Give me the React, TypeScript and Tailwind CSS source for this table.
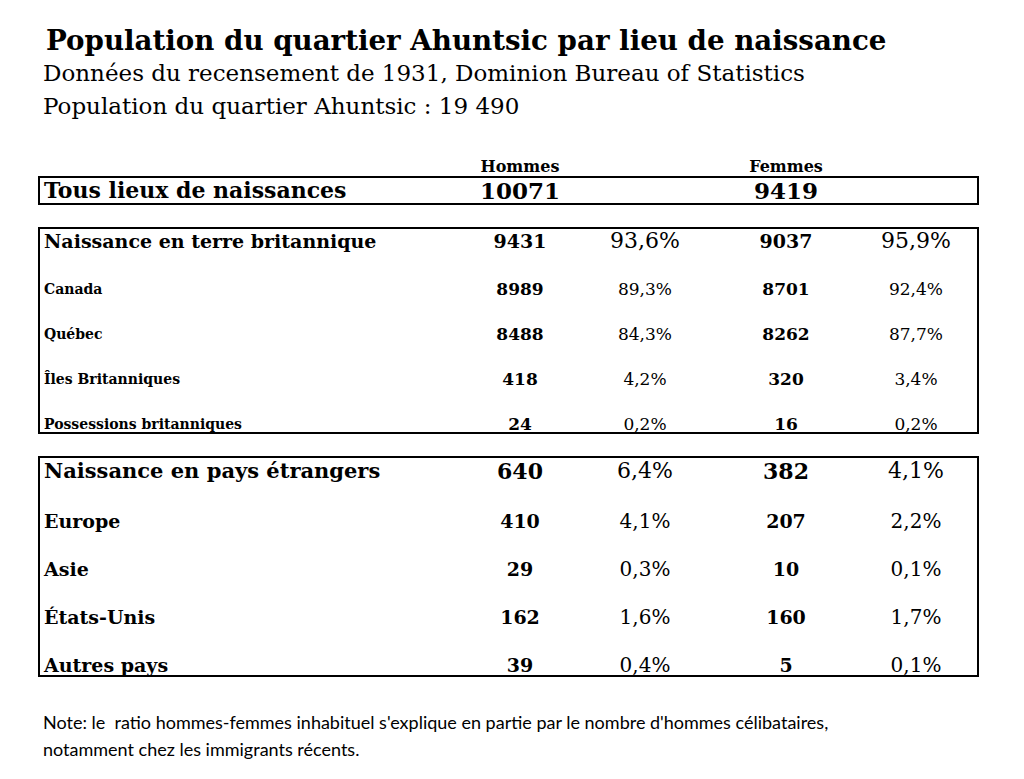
const serif = "font-['DejaVu_Serif',serif]";

type Row = { label: string; h: string; f: string; hp: string; fp: string };

const brit: Row[] = [
  { label: "Canada", h: "8989", hp: "89,3%", f: "8701", fp: "92,4%" },
  { label: "Québec", h: "8488", hp: "84,3%", f: "8262", fp: "87,7%" },
  { label: "Îles Britanniques", h: "418", hp: "4,2%", f: "320", fp: "3,4%" },
  { label: "Possessions britanniques", h: "24", hp: "0,2%", f: "16", fp: "0,2%" },
];

const foreign: Row[] = [
  { label: "Europe", h: "410", hp: "4,1%", f: "207", fp: "2,2%" },
  { label: "Asie", h: "29", hp: "0,3%", f: "10", fp: "0,1%" },
  { label: "États-Unis", h: "162", hp: "1,6%", f: "160", fp: "1,7%" },
  { label: "Autres pays", h: "39", hp: "0,4%", f: "5", fp: "0,1%" },
];

const grid = "grid grid-cols-[420px_120px_130px_152px_108px]";

export default function App() {
  return (
    <div className={`w-[1024px] h-[779px] bg-white text-black ${serif}`}>
      <div className="pt-[26px] pl-[43px]">
        <h1 className="text-[27.7px] leading-[30px] font-bold pl-[3px]">
          Population du quartier Ahuntsic par lieu de naissance
        </h1>
        <p className="text-[23px] leading-[33px] pt-[1px]">
          Données du recensement de 1931, Dominion Bureau of Statistics
        </p>
        <p className="text-[23px] leading-[33px]">Population du quartier Ahuntsic : 19 490</p>
      </div>

      <div className="ml-[38px] w-[941px] mt-[32px]">
        <div className={`${grid} px-[2px] h-[20px] items-end text-[16px] leading-[16px] font-bold`}>
          <span />
          <span className="text-center">Hommes</span>
          <span />
          <span className="text-center">Femmes</span>
          <span />
        </div>

        <div className={`${grid} border-2 border-black h-[29px] items-center mt-[1px] text-[22px] leading-[25px] font-bold`}>
          <span className="pl-[4px]">Tous lieux de naissances</span>
          <span className="text-center text-[23px]">10071</span>
          <span />
          <span className="text-center text-[23px]">9419</span>
          <span />
        </div>

        <div className="border-2 border-black mt-[22px]">
          <div className={`${grid} h-[23px] items-end leading-[22px]`}>
            <span className="pl-[4px] text-[19px] font-bold">Naissance en terre britannique</span>
            <span className="text-center text-[19px] font-bold">9431</span>
            <span className="text-center text-[22px]">93,6%</span>
            <span className="text-center text-[19px] font-bold">9037</span>
            <span className="text-center text-[22px]">95,9%</span>
          </div>
          {brit.map((r) => (
            <div key={r.label} className={`${grid} h-[45px] items-end leading-[16px]`}>
              <span className="pl-[4px] text-[14px] font-bold">{r.label}</span>
              <span className="text-center text-[17px] font-bold">{r.h}</span>
              <span className="text-center text-[17px]">{r.hp}</span>
              <span className="text-center text-[17px] font-bold">{r.f}</span>
              <span className="text-center text-[17px]">{r.fp}</span>
            </div>
          ))}
        </div>

        <div className="border-2 border-black mt-[22px]">
          <div className={`${grid} h-[25px] items-end leading-[24px]`}>
            <span className="pl-[4px] text-[21px] font-bold">Naissance en pays étrangers</span>
            <span className="text-center text-[22px] font-bold">640</span>
            <span className="text-center text-[22px]">6,4%</span>
            <span className="text-center text-[22px] font-bold">382</span>
            <span className="text-center text-[22px]">4,1%</span>
          </div>
          {foreign.map((r) => (
            <div key={r.label} className={`${grid} h-[48px] items-end leading-[20px]`}>
              <span className="pl-[4px] text-[19px] font-bold">{r.label}</span>
              <span className="text-center text-[19px] font-bold">{r.h}</span>
              <span className="text-center text-[20px]">{r.hp}</span>
              <span className="text-center text-[19px] font-bold">{r.f}</span>
              <span className="text-center text-[20px]">{r.fp}</span>
            </div>
          ))}
        </div>
      </div>

      <div className="pl-[43px] mt-[32px] font-['Lato',sans-serif] text-[18px] leading-[27px]">
        <p>
          Note: le&nbsp; ratio hommes-femmes inhabituel s'explique en partie par le nombre d'hommes célibataires,
        </p>
        <p>notamment chez les immigrants récents.</p>
      </div>
    </div>
  );
}
